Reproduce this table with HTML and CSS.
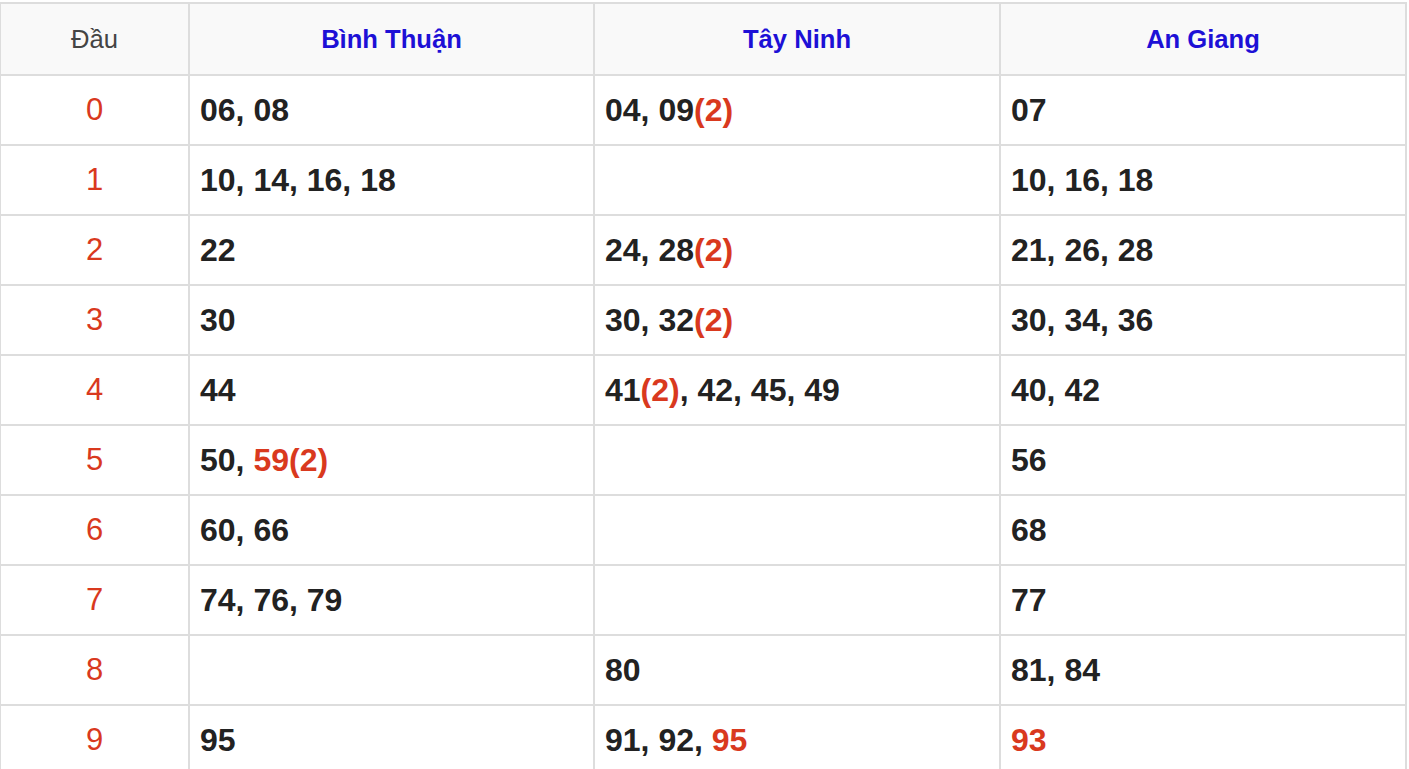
FILE: index.html
```html
<!DOCTYPE html>
<html lang="vi">
<head>
<meta charset="utf-8">
<title>Đầu lô tô</title>
<link rel="stylesheet" href="styles.css">
</head>
<body>
<div class="grid">
  <div class="cell head first">Đầu</div>
  <div class="cell head prov">Bình Thuận</div>
  <div class="cell head prov">Tây Ninh</div>
  <div class="cell head prov">An Giang</div>

  <div class="cell first">0</div>
  <div class="cell num">06, 08</div>
  <div class="cell num">04, 09<span class="red">(2)</span></div>
  <div class="cell num">07</div>

  <div class="cell first">1</div>
  <div class="cell num">10, 14, 16, 18</div>
  <div class="cell num"></div>
  <div class="cell num">10, 16, 18</div>

  <div class="cell first">2</div>
  <div class="cell num">22</div>
  <div class="cell num">24, 28<span class="red">(2)</span></div>
  <div class="cell num">21, 26, 28</div>

  <div class="cell first">3</div>
  <div class="cell num">30</div>
  <div class="cell num">30, 32<span class="red">(2)</span></div>
  <div class="cell num">30, 34, 36</div>

  <div class="cell first">4</div>
  <div class="cell num">44</div>
  <div class="cell num">41<span class="red">(2)</span>, 42, 45, 49</div>
  <div class="cell num">40, 42</div>

  <div class="cell first">5</div>
  <div class="cell num">50,&nbsp;<span class="red">59(2)</span></div>
  <div class="cell num"></div>
  <div class="cell num">56</div>

  <div class="cell first">6</div>
  <div class="cell num">60, 66</div>
  <div class="cell num"></div>
  <div class="cell num">68</div>

  <div class="cell first">7</div>
  <div class="cell num">74, 76, 79</div>
  <div class="cell num"></div>
  <div class="cell num">77</div>

  <div class="cell first">8</div>
  <div class="cell num"></div>
  <div class="cell num">80</div>
  <div class="cell num">81, 84</div>

  <div class="cell first">9</div>
  <div class="cell num">95</div>
  <div class="cell num">91, 92,&nbsp;<span class="red">95</span></div>
  <div class="cell num"><span class="red">93</span></div>
</div>
</body>
</html>
```

FILE: styles.css
```css
html, body {
  margin: 0;
  padding: 0;
  background: #ffffff;
}

body {
  font-family: "Liberation Sans", Arial, Helvetica, sans-serif;
  overflow: hidden;
}

.grid {
  display: grid;
  grid-template-columns: 189px 405px 406px 406px;
  grid-template-rows: 72px;
  grid-auto-rows: 70px;
  width: 1408px;
  margin: 2px 0 0 -1px;
  border-top: 2px solid #dddddd;
  border-left: 2px solid #dddddd;
  box-sizing: border-box;
}

.cell {
  display: flex;
  align-items: center;
  box-sizing: border-box;
  border-right: 2px solid #dddddd;
  border-bottom: 2px solid #dddddd;
  white-space: nowrap;
}

.first {
  justify-content: center;
  color: #d9391e;
  font-size: 31px;
}

.head {
  background: #f9f9f9;
  justify-content: center;
  font-size: 25.6px;
}

.head.first {
  color: #444444;
  font-weight: normal;
  font-size: 25.6px;
}

.head.prov {
  color: #1d10d6;
  font-weight: bold;
}

.num {
  padding-left: 10px;
  font-size: 32px;
  font-weight: bold;
  color: #222222;
}

.red {
  color: #d9391e;
}
```
